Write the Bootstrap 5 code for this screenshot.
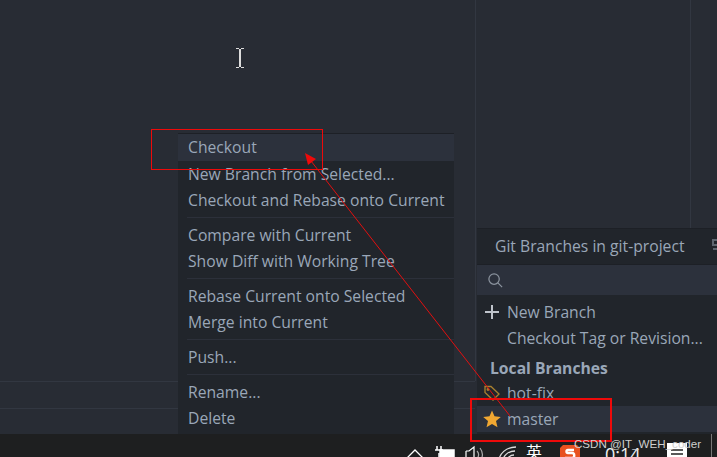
<!DOCTYPE html>
<html lang="en">
<head>
<meta charset="utf-8">
<title>Git Branches</title>
<link href="https://cdn.jsdelivr.net/npm/bootstrap@5.3.0/dist/css/bootstrap.min.css" rel="stylesheet">
<style>
html,body{height:100%;}
body{background:#282c34;font-family:"Open Sans","Noto Sans",sans-serif;color:#9aa7b8;overflow:hidden;position:relative;width:717px;height:457px;}
.desk{position:relative;width:717px;height:457px;overflow:hidden;}
.vline{position:absolute;width:1px;background:#323741;}
.hline{position:absolute;height:1px;background:#323741;}
.ctx{position:absolute;left:178px;top:133px;width:276px;height:301px;background:#21252b;border-top:1px solid #1d2026;font-size:15.7px;line-height:26px;}
.ctx-item{height:26px;padding-left:10px;white-space:nowrap;}
.ctx-item.on{background:#2c313c;height:27px;}
.ctx-gap{height:1px;background:#2c303a;margin:4px 0 4px 9px;}
.pop{position:absolute;left:477px;top:228px;width:240px;height:206px;background:#21252b;border-top:1px solid #1d2026;font-size:15.7px;line-height:26px;}
.pop-head{height:36px;line-height:35px;padding-left:18px;white-space:nowrap;border-bottom:1px solid #1d2026;position:relative;}
.pop-search{height:30px;background:#2c313c;padding:7px 0 0 10px;margin-bottom:4px;}
.pop-search svg{display:block;}
.pop-row{height:26px;white-space:nowrap;}
.pop-ico{width:30px;flex:none;}
.pop-title{font-weight:700;padding-left:13px;margin-top:4px;margin-bottom:-1px;}
.pop-row.on{background:#2c313c;}
.bar{position:absolute;left:0;top:434px;width:717px;height:23px;background:#1e1f20;overflow:hidden;}
.bar svg,.bar span{position:absolute;}
.bar-clock{left:605px;top:8px;color:#f0f0f0;font-size:18px;line-height:24px;}
.bar-en{left:526px;top:7px;color:#fff;font-size:16px;line-height:20px;font-family:"Noto Sans CJK SC",sans-serif;}
.mark-text{position:absolute;left:574px;top:436px;font-size:11.6px;line-height:16px;color:#cfcfcf;white-space:nowrap;font-family:"Liberation Sans",sans-serif;}
.redbox{position:absolute;border:1px solid #ee0a0a;}
.redbox.two{border-width:2px;}
.arrow{position:absolute;left:0;top:0;}
.caret{position:absolute;left:236px;top:48px;}
.edge-ico{position:absolute;left:235px;top:10px;}
</style>
</head>
<body>
<div class="desk">
  <div class="vline" style="left:475px;top:0;height:381px"></div>
  <div class="vline" style="left:690px;top:0;height:228px"></div>
  <div class="hline" style="left:0;top:381px;width:475px"></div>
  <div class="hline" style="left:0;top:408px;width:475px"></div>

  <svg class="caret" width="8" height="20" viewBox="0 0 8 20"><path d="M0 .5h3M5 .5h3M0 19.5h3M5 19.5h3" stroke="#ddd" fill="none"/><rect x="3" y="1" width="2" height="18" fill="#ddd"/></svg>

  <div class="ctx">
    <div class="ctx-item on">Checkout</div>
    <div class="ctx-item">New Branch from Selected...</div>
    <div class="ctx-item">Checkout and Rebase onto Current</div>
    <div class="ctx-gap"></div>
    <div class="ctx-item">Compare with Current</div>
    <div class="ctx-item">Show Diff with Working Tree</div>
    <div class="ctx-gap"></div>
    <div class="ctx-item">Rebase Current onto Selected</div>
    <div class="ctx-item">Merge into Current</div>
    <div class="ctx-gap"></div>
    <div class="ctx-item">Push...</div>
    <div class="ctx-gap"></div>
    <div class="ctx-item">Rename...</div>
    <div class="ctx-item">Delete</div>
  </div>

  <div class="pop">
    <div class="pop-head">Git Branches in git-project<svg class="edge-ico" width="5" height="16" viewBox="0 0 5 16" fill="none" stroke="#5f6670" stroke-width="2"><path d="M5 1H1v5h4M5 10H1"/></svg></div>
    <div class="pop-search"><svg width="17" height="17" viewBox="0 0 18 18" fill="none" stroke="#8b939e" stroke-width="1.3"><circle cx="7.5" cy="7.5" r="5.5"/><path d="M11.5 11.5l4.5 4.5"/></svg></div>
    <div class="pop-row d-flex"><div class="pop-ico d-flex align-items-center justify-content-center"><svg width="14" height="14" viewBox="0 0 14 14"><path d="M6 0h2v6h6v2H8v6H6V8H0V6h6z" fill="#bfc4cb"/></svg></div><div>New Branch</div></div>
    <div class="pop-row d-flex"><div class="pop-ico"></div><div>Checkout Tag or Revision...</div></div>
    <div class="pop-row pop-title">Local Branches</div>
    <div class="pop-row d-flex"><div class="pop-ico d-flex align-items-center justify-content-center"><svg width="18" height="18" viewBox="0 0 18 18" fill="none" stroke="#a8802f" stroke-width="1.3"><path d="M2 2.5h6l8 7.5-6 6-8-7.5z"/><circle cx="5" cy="5.5" r=".8"/></svg></div><div>hot-fix</div></div>
    <div class="pop-row on d-flex"><div class="pop-ico d-flex align-items-center justify-content-center"><svg width="18" height="18" viewBox="0 0 18 18"><path d="M9 .5l2.5 5.8 6.3.6-4.8 4.1 1.5 6.2L9 13.9l-5.5 3.3L5 11 .2 6.9l6.3-.6z" fill="#f0a732"/></svg></div><div>master</div></div>
  </div>

  <div class="bar">
    <svg style="left:406px;top:14px" width="18" height="10" viewBox="0 0 18 10" fill="none" stroke="#fff" stroke-width="1.3"><path d="M1 10l8-8 8 8"/></svg>
    <svg style="left:435px;top:12px" width="22" height="16" viewBox="0 0 22 16" fill="none" stroke="#fff" stroke-width="1.5"><path d="M2 0v4M6 0v4M0 4h8M4 7v5"/><rect x="5" y="4" width="14" height="12" fill="#fff"/></svg>
    <svg style="left:465px;top:11px" width="20" height="16" viewBox="0 0 20 16" fill="none" stroke="#fff" stroke-width="1.2"><path d="M1 6h3l5-4v14M1 6v8h3"/><path d="M12 6c2 2 2 5 0 8M15 3c3 4 3 9 0 13" stroke="#aaa"/></svg>
    <svg style="left:498px;top:12px" width="20" height="15" viewBox="0 0 20 15" fill="none" stroke="#ddd" stroke-width="1.3"><path d="M1 15C1 8 8 1 18 1M5 15c0-5 5-10 12-10M9 15c0-3 3-6 7-6"/></svg>
    <span class="bar-en">英</span>
    <svg style="left:560px;top:11px" width="20" height="17" viewBox="0 0 20 17"><path d="M3 0h14l3 3v14H0V3z" fill="#e8511f"/><path d="M14 5H8C6 5 6 8 8 8h4c3 0 3 5 0 5H5" stroke="#fff" stroke-width="2.4" fill="none"/></svg>
    <span class="bar-clock">0:14</span>
    <svg style="left:667px;top:9px" width="20" height="17" viewBox="0 0 20 17"><rect width="20" height="17" fill="#fff"/><path d="M4 7h12M4 11h12" stroke="#222" stroke-width="1.4"/></svg>
    <div class="vline" style="left:711px;top:0;height:23px;background:#777"></div>
  </div>

  <div class="redbox" style="left:151px;top:129px;width:172px;height:41px"></div>
  <div class="redbox two" style="left:470px;top:398px;width:142px;height:44px"></div>
  <svg class="arrow" width="717" height="457" viewBox="0 0 717 457"><path d="M510 416L311 161" stroke="#e21010" stroke-width="1" fill="none"/><path d="M305 153l11 6-8 6z" fill="#ee0a0a"/></svg>
  <div class="mark-text">CSDN @IT_WEH_coder</div>
</div>
<script src="https://cdn.jsdelivr.net/npm/bootstrap@5.3.0/dist/js/bootstrap.bundle.min.js"></script>
</body>
</html>
